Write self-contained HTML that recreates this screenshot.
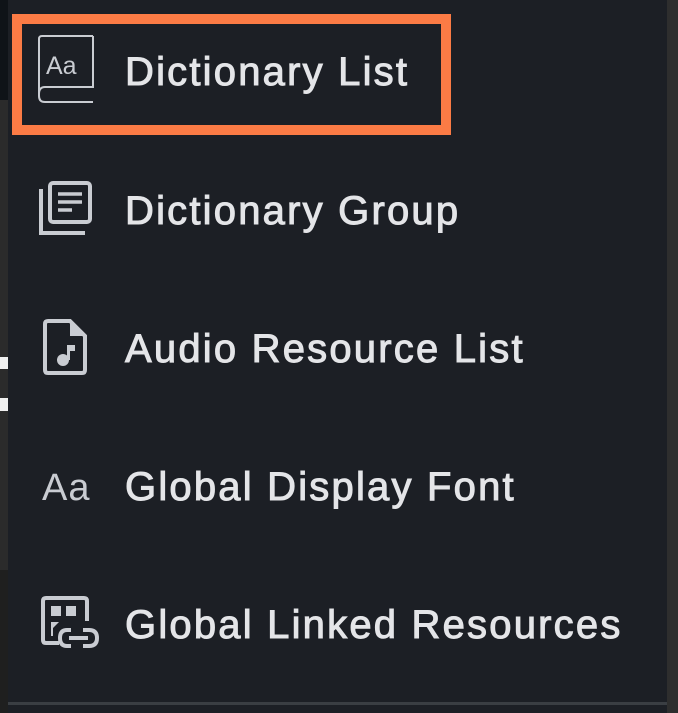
<!DOCTYPE html><html><head><style>
body{margin:0;width:678px;height:713px;overflow:hidden;background:#1c1f25;position:relative;font-family:"Liberation Sans",sans-serif}
.ls{position:absolute;left:0;width:8px}
.row{position:absolute;left:125px;font-size:40px;color:#e4e5e8;letter-spacing:2.2px;-webkit-text-stroke:1px #e4e5e8;line-height:1}
svg{position:absolute}
</style></head><body>
<div class="ls" style="top:0;height:100px;background:#0f1318"></div>
<div class="ls" style="top:100px;height:470px;background:#2b2b2b"></div>
<div class="ls" style="top:570px;height:143px;background:#1f1f1f"></div>
<div class="ls" style="top:357px;height:12px;background:#f0f0f0"></div>
<div class="ls" style="top:398px;height:13px;background:#f0f0f0"></div>
<div style="position:absolute;left:667px;top:0;width:11px;height:713px;background:#2e2e2e"></div>
<div style="position:absolute;left:8px;top:702px;width:659px;height:3px;background:#3a3e43"></div>
<div style="position:absolute;left:12px;top:14px;width:419px;height:101px;border:10px solid #fb7b45"></div>

<svg style="left:36px;top:34px" width="60" height="70" viewBox="0 0 60 70" fill="none" stroke="#c9ccd2" stroke-width="2">
<path d="M57 2H6Q3 2 3 5V62Q3 68 9 68H57M57 2V53H9Q3 53 3 60"/>
<text x="10" y="40" font-family="Liberation Sans" font-size="25" fill="#c9ccd2" stroke="none">Aa</text>
</svg>
<div class="row" style="top:52px">Dictionary List</div>

<svg style="left:38px;top:180px" width="58" height="56" viewBox="0 0 58 56" fill="none" stroke="#c9ccd2" stroke-width="4">
<rect x="12" y="3" width="40" height="39" rx="3"/>
<path d="M3 9V53H47"/>
<path d="M20 14H44M20 22H44M20 30H34" stroke-width="3.5"/>
</svg>
<div class="row" style="top:191px">Dictionary Group</div>

<svg style="left:42px;top:318px" width="46" height="58" viewBox="0 0 46 58">
<path d="M6 3H28L43 18V52Q43 55 40 55H6Q3 55 3 52V6Q3 3 6 3Z" fill="none" stroke="#c9ccd2" stroke-width="4"/>
<path d="M28 3V18H43Z" fill="#c9ccd2"/>
<circle cx="21" cy="42" r="6" fill="#c9ccd2"/>
<path d="M25 42V27H33V33H28V42" fill="#c9ccd2"/>
</svg>
<div class="row" style="top:329px">Audio Resource List</div>

<div style="position:absolute;left:42px;top:467px;font-size:38px;color:#c9ccd2;letter-spacing:1px">Aa</div>
<div class="row" style="top:467px">Global Display Font</div>

<svg style="left:40px;top:595px" width="60" height="55" viewBox="0 0 60 55" fill="none" stroke="#c9ccd2" stroke-width="4">
<path d="M19 48H6Q3 48 3 45V6Q3 3 6 3H44Q47 3 47 6V26"/>
<rect x="11" y="11" width="10" height="10" fill="#c9ccd2" stroke="none"/>
<rect x="26" y="11" width="10" height="10" fill="#c9ccd2" stroke="none"/>
<path d="M11 27H19L13 33V41H11Z" fill="#c9ccd2" stroke="none"/>
<path d="M31 51H27Q20 51 20 43Q20 35 27 35H31M43 35H49Q57 35 57 43Q57 51 49 51H43M29 43H48"/>
</svg>
<div class="row" style="top:605px">Global Linked Resources</div>
</body></html>
